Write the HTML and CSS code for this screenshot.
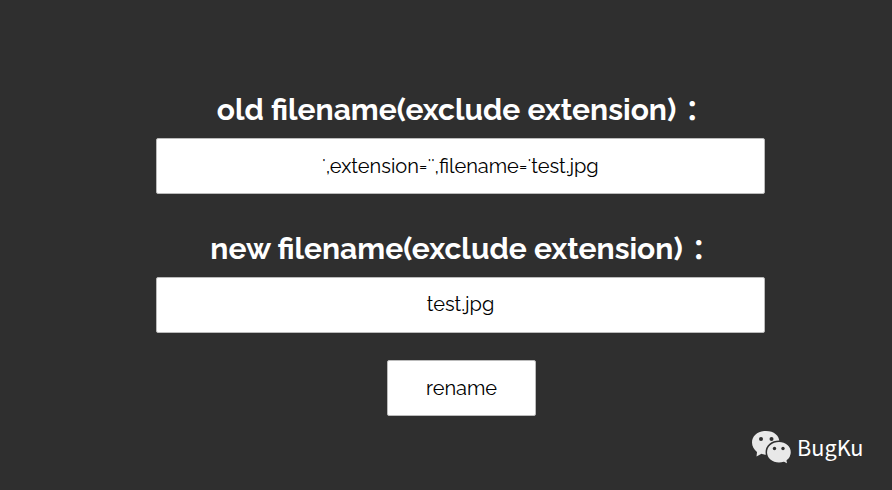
FILE: index.html
```html
<!DOCTYPE html>
<html lang="en"><head><meta charset="utf-8"><title>Rename</title><link rel="stylesheet" href="styles.css"></head>
<body>
<form class="rename-form">
<label class="heading old"><span class="label-text">old filename(exclude extension)</span><span class="colon">：</span></label>
<div class="field"><span class="quote">'</span>,extension=<span class="quote">'</span><span class="quote">'</span>,filename=<span class="quote">'</span>test.jpg</div>
<label class="heading new"><span class="label-text">new filename(exclude extension)</span><span class="colon">：</span></label>
<div class="field second">test.jpg</div>
<button class="submit" type="button">rename</button>
</form>
<div class="watermark">
<svg class="logo" viewBox="0 0 40 36"><path class="bubble" d="M14 1C6 1 0 6 0 12.500c0 4 2 7 5 9.500l-.5 4.500 5-2.700c2 .7 3 .9 4.500.9 8 0 13.500-5.300 13.500-12.200S22 1 14 1Z"/><circle class="eye" cx="9" cy="9" r="2"/><circle class="eye" cx="19.500" cy="9" r="2"/><path class="bubble front" d="M27 11.300c-7.200 0-12.700 4.700-12.700 11s5.500 11 12.700 11c2 0 3.500-.3 5-.8l4 2.200-.7-4c2.500-2 4.200-4.800 4.200-8.400 0-6.200-5.300-11-12.500-11Z"/><circle class="eye" cx="22.500" cy="18.500" r="1.700"/><circle class="eye" cx="31" cy="18.500" r="1.700"/></svg>
<span class="brand">BugKu</span></div>
</body></html>
```
FILE: styles.css
```css
* { box-sizing: border-box; }
body { margin: 0; height: 490px; overflow: hidden; background: #2f2f2f; color: #fff; font-family: Raleway, Lato, "Noto Sans CJK SC", sans-serif; }
.rename-form { width: 609px; margin-left: 156px; padding-top: 82px; display: flex; flex-direction: column; align-items: center; }
.heading { height: 56px; line-height: 56px; font-size: 30px; font-weight: 700; white-space: nowrap; display: flex; padding-left: 2px; }
.new { margin-top: 27px; }
.colon { width: 30px; padding-left: 9px; font-size: 28px; line-height: 57px; }
.field { width: 609px; height: 56px; border: 1px solid #bbb; border-radius: 2px; background: #fff; color: #000; font-size: 20px; line-height: 54px; text-align: center; }
.second { line-height: 52px; }
.quote { display: inline-block; width: 3.5px; font-size: 10px; font-weight: 700; line-height: 10px; vertical-align: 7px; text-align: center; }
.submit { width: 149px; height: 56px; margin: 27px 0 0 2px; border: 1px solid #bbb; border-radius: 2px; background: #fff; color: #000; font: 20px Raleway, Lato, sans-serif; }
.watermark { position: absolute; left: 752px; top: 430px; display: flex; align-items: center; gap: 5px; font: 21.7px/33px "Noto Sans CJK SC", sans-serif; }
.brand { padding-bottom: 3px; }
.logo { width: 40px; height: 36px; }
.bubble { fill: #e8e8e8; }
.front { stroke: #2f2f2f; stroke-width: 1.5; }
.eye { fill: #2f2f2f; }
```
